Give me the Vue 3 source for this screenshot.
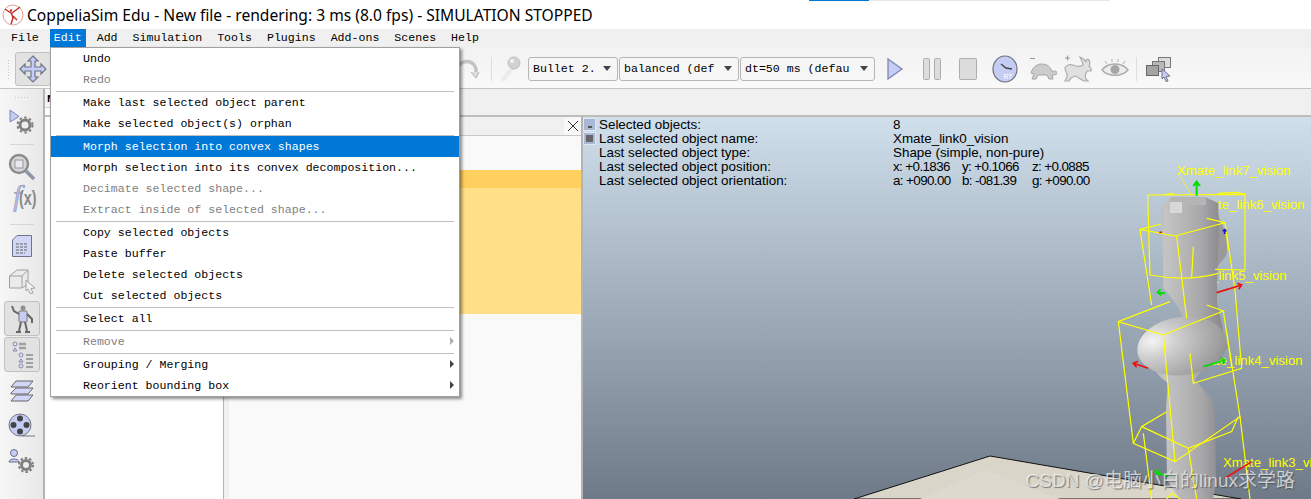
<template>
  <div class="window">
    <div class="titlebar">
      <svg class="app-logo" viewBox="0 0 22 22" width="22" height="22">
        <circle cx="11" cy="11" r="10" fill="#fff" stroke="#e2a09a" stroke-width="1" />
        <path d="M3 5 L9.500 9.500 L18 3 M9.500 9.500 L11 14 L9 20 M11 12 L15 16" fill="none" stroke="#c5281e" stroke-width="1.400" />
        <circle cx="9" cy="6.500" r="1.200" fill="#c5281e" />
      </svg>
      <span class="title-text">CoppeliaSim Edu - New file - rendering: 3 ms (8.0 fps) - SIMULATION STOPPED</span>
      <div class="top-strip"><i class="strip-blue"></i><i class="strip-grey"></i></div>
    </div>

    <div class="menubar">
      <span v-for="m in menus" :key="m" class="menu-item" :class="{ active: m === 'Edit' }">{{ m }}</span>
    </div>

    <div class="toolbar">
      <div class="grip"></div>
      <div class="tool-btn move-btn">
        <svg viewBox="0 0 30 30" width="30" height="30">
          <path d="M15 2 L20 7 H17 V13 H23 V10 L28 15 L23 20 V17 H17 V23 H20 L15 28 L10 23 H13 V17 H7 V20 L2 15 L7 10 V13 H13 V7 H10 Z" fill="#c6cdf5" stroke="#6f7688" stroke-width="1.200" />
        </svg>
      </div>
      <div class="toolbar-right">
        <svg class="undo-ghost" viewBox="0 0 24 24" width="24" height="24">
          <path d="M3 8 C9 2 18 4 20 12 L20 19" fill="none" stroke="#c4c4c4" stroke-width="3.500" />
          <path d="M15 15 L20 21 L23 15" fill="#dedede" stroke="#b5b5b5" />
        </svg>
        <div class="vsep"></div>
        <svg class="pin" viewBox="0 0 26 28" width="26" height="28">
          <path d="M4 25 L15 11 L19 13 L8 27 Z" fill="#ececec" />
          <circle cx="18" cy="8" r="6" fill="#d2d2d2" stroke="#bdbdbd" />
          <circle cx="16" cy="6" r="2" fill="#f3f3f3" />
        </svg>
        <div class="combo w-bullet">Bullet 2.<b></b></div>
        <div class="combo w-balanced">balanced (def<b></b></div>
        <div class="combo w-dt">dt=50 ms (defau<b></b></div>
        <svg class="play" viewBox="0 0 18 24" width="18" height="24">
          <path d="M2 2 L16 12 L2 22 Z" fill="#c6cdf5" stroke="#7d86b5" stroke-width="1.300" />
        </svg>
        <svg class="pause" viewBox="0 0 20 24" width="20" height="24">
          <rect x="1.500" y="1.500" width="6" height="21" rx="1" fill="#dcdcdc" stroke="#adadad" />
          <rect x="12.500" y="1.500" width="6" height="21" rx="1" fill="#dcdcdc" stroke="#adadad" />
        </svg>
        <svg class="stop" viewBox="0 0 18 24" width="18" height="24">
          <rect x="0.500" y="1.500" width="17" height="21" rx="1" fill="#dcdcdc" stroke="#adadad" />
        </svg>
        <svg class="clock" viewBox="0 0 26 28" width="26" height="28">
          <ellipse cx="13" cy="14" rx="12" ry="13" fill="#c6cdf5" stroke="#6d7180" stroke-width="1.200" />
          <path d="M9 9 L14 13 L20 14" fill="none" stroke="#444" stroke-width="1.400" />
          <text x="16" y="24" class="rt">RT</text>
        </svg>
        <svg class="turtle" viewBox="0 0 28 26" width="28" height="26">
          <path d="M1 2.500 H6" stroke="#999" />
          <path d="M2 17 C4 10 9 8 13 8 C18 8 22 11 23 16 C25 14 28 15 28 17 C28 19 25 19 23 19 L24 23 H20 L18 19 H9 L7 23 H3 L5 18 Z" fill="#cccccc" stroke="#a6a6a6" />
        </svg>
        <svg class="rabbit" viewBox="0 0 28 27" width="28" height="27">
          <path d="M1 3 H6 M3.500 0.500 V5.500" stroke="#999" />
          <path d="M1 13 C2 10 6 9 9 10 C13 12 16 12 19 10 C19 7 17 4 16 2 C19 3 21 5 22 7 C22 5 23 4 24 4 C26 6 26 9 25 11 C27 13 28 15 27 16 L23 16 C22 19 20 21 22 24 L24 26 L20 26 C16 24 14 22 11 21 C8 22 6 24 5 26 L1 26 L3 22 C4 19 1 16 1 13 Z" fill="#e0e0e0" stroke="#adadad" stroke-width="1.200" />
        </svg>
        <svg class="eye" viewBox="0 0 28 20" width="28" height="20">
          <path d="M1 11 C7 3 21 3 27 11 C21 18 7 18 1 11 Z" fill="#ececec" stroke="#a8a8a8" stroke-width="1.300" />
          <circle cx="14" cy="10.500" r="4.500" fill="#a6a6a6" />
          <path d="M6 5 L4 2 M11 3 V0 M17 3 V0 M22 5 L24 2" stroke="#b0b0b0" />
        </svg>
        <div class="vsep sep-last"></div>
        <svg class="layers" viewBox="0 0 28 26" width="28" height="26">
          <rect x="13.500" y="1.500" width="12" height="10" fill="#dcdcdc" stroke="#777" />
          <rect x="7.500" y="5.500" width="12" height="10" fill="#b8b8b8" stroke="#777" />
          <rect x="1.500" y="9.500" width="12" height="10" fill="#a4a4a4" stroke="#666" />
          <path d="M17 13 L25 20 L21 20.500 L23 25 L21 25.500 L19 21 L17 23 Z" fill="#c6cdf5" stroke="#6f7688" />
        </svg>
      </div>
    </div>

    <div class="lower">
      <aside class="sidebar">
        <div class="side-grip"></div>
        <svg class="side-icon i-gear" viewBox="0 0 26 26" width="26" height="26">
          <path d="M1 1 L10 7.500 L1 13 Z" fill="#c6cdf5" stroke="#7d86b5" />
          <circle cx="16" cy="16" r="5" fill="none" stroke="#808080" stroke-width="3" />
          <circle cx="16" cy="16" r="7.500" fill="none" stroke="#808080" stroke-width="2" stroke-dasharray="2.500 2.400" />
        </svg>
        <div class="side-sep sep-a"></div>
        <svg class="side-icon i-magnify" viewBox="0 0 28 28" width="28" height="28">
          <circle cx="11" cy="11" r="9" fill="#d6d6dc" stroke="#8b8b8b" stroke-width="2.400" />
          <rect x="7" y="7" width="8" height="8" fill="#e8e8ee" stroke="#999" />
          <path d="M18 18 L26 26" stroke="#8d95a8" stroke-width="3.500" />
        </svg>
        <svg class="side-icon i-fx" viewBox="0 0 28 30" width="28" height="30">
          <text x="5" y="24" class="fx-f">f</text>
          <text transform="translate(11 23) scale(0.72 1)" class="fx-x">(x)</text>
        </svg>
        <div class="side-sep sep-b"></div>
        <svg class="side-icon i-doc" viewBox="0 0 22 24" width="22" height="24">
          <path d="M6 1.500 H20.500 V22.500 H1.500 V6 Z" fill="#d2d6f7" stroke="#6e7388" />
          <path d="M5 10 H17 M5 13 H17 M5 16 H17 M5 19 H14" stroke="#666" stroke-dasharray="3 1" />
        </svg>
        <svg class="side-icon i-cube" viewBox="0 0 28 26" width="28" height="26">
          <path d="M1.500 8 L9 2 H20 V16 L14 20 H1.500 Z M1.500 8 H14 V20 M14 8 L20 2" fill="#ebebeb" stroke="#a0a0a0" />
          <path d="M18 12 L27 20 L23 20.500 L25 25 L22 25.500 L20 21 L18 23 Z" fill="#f1f1f1" stroke="#a0a0a0" />
        </svg>
        <div class="side-btn i-robot">
          <svg viewBox="0 0 30 30" width="30" height="30">
            <circle cx="16" cy="4" r="2.500" fill="#8d8d8d" />
            <rect x="12" y="7" width="8" height="11" rx="1" fill="#c6cdf5" stroke="#777" />
            <path d="M12 10 L7 7 L5 2 M20 10 L25 15 L25 19 M14 18 L12 27 M18 18 L20 27" fill="none" stroke="#666" stroke-width="2" />
            <path d="M9 28 H14 M18 28 H23" stroke="#666" stroke-width="2" />
          </svg>
        </div>
        <div class="side-btn i-list">
          <svg viewBox="0 0 30 30" width="30" height="30">
            <circle cx="8" cy="4" r="2" fill="none" stroke="#8088b5" />
            <path d="M8 8 L10 11 H6 Z" fill="none" stroke="#8088b5" />
            <path d="M12 4 H19 M12 8 H19" stroke="#a0a0a0" stroke-width="2.500" />
            <circle cx="14" cy="15" r="2" fill="none" stroke="#8088b5" />
            <path d="M14 19 L16 22 H12 Z" fill="none" stroke="#8088b5" />
            <circle cx="14" cy="26" r="2" fill="none" stroke="#8088b5" />
            <path d="M19 15 H26 M19 19 H26 M19 23 H26 M19 27 H26" stroke="#a0a0a0" stroke-width="2.200" />
          </svg>
        </div>
        <svg class="side-icon i-stack" viewBox="0 0 24 22" width="24" height="22">
          <path d="M6 1 H23 L18 7 H1 Z" fill="#d2d6f7" stroke="#666" />
          <path d="M1 13 L6 8 H23 L18 14 H1 Z" fill="#d2d6f7" stroke="#666" />
          <path d="M1 21 L6 15 H23 L18 21 Z" fill="#d2d6f7" stroke="#666" />
        </svg>
        <svg class="side-icon i-film" viewBox="0 0 28 26" width="28" height="26">
          <circle cx="12" cy="12" r="11" fill="#c6cdf5" stroke="#75757f" />
          <circle cx="12" cy="5.500" r="3" fill="#444" />
          <circle cx="12" cy="18.500" r="3" fill="#444" />
          <circle cx="5.500" cy="12" r="3" fill="#444" />
          <circle cx="18.500" cy="12" r="3" fill="#444" />
          <path d="M14 23 H27" stroke="#777" />
        </svg>
        <svg class="side-icon i-user" viewBox="0 0 28 26" width="28" height="26">
          <circle cx="6" cy="5" r="3.500" fill="#c6cdf5" stroke="#666a88" />
          <path d="M1 14 C1 10 11 10 11 14 Z" fill="#c6cdf5" stroke="#666a88" />
          <circle cx="18" cy="17" r="4.500" fill="none" stroke="#808080" stroke-width="3" />
          <circle cx="18" cy="17" r="7" fill="none" stroke="#808080" stroke-width="2" stroke-dasharray="2.500 2" />
        </svg>
      </aside>

      <div class="work">
        <div class="subbar">
          <div class="hier-head"><div class="hier-tab">N</div></div>
        </div>
        <div class="body">
          <div class="hierarchy"></div>

          <section class="panel">
            <div class="panel-head"><span class="close-x">
              <svg viewBox="0 0 14 14" width="14" height="14"><path d="M2 2 L12 12 M12 2 L2 12" stroke="#333" /></svg>
            </span></div>
            <div class="panel-gap"></div>
            <div class="row-strong"></div>
            <div class="row-light"></div>
          </section>

          <main class="viewport">
            <svg class="scene" viewBox="583 117 728 382" width="728" height="382">
              <defs>
                <linearGradient id="metal" x1="0" x2="1" y1="0" y2="0">
                  <stop offset="0" stop-color="#8f8f91" />
                  <stop offset="0.3" stop-color="#c4c4c4" />
                  <stop offset="0.7" stop-color="#a9a9ab" />
                  <stop offset="1" stop-color="#808082" />
                </linearGradient>
                <radialGradient id="bulge" cx="0.18" cy="0.35" r="0.9">
                  <stop offset="0" stop-color="#f4f4f4" />
                  <stop offset="0.3" stop-color="#cfcfcf" />
                  <stop offset="1" stop-color="#909092" />
                </radialGradient>
              </defs>

              <path d="M854 499 L990 456 L1241 499 Z" fill="#d9d5c9" stroke="#111" stroke-width="1" />
              <path d="M920 499 L985 470 L1060 499 Z" fill="#ded9ce" />

              <text x="1177" y="175" class="label">Xmate_link7_vision</text>
              <text x="1191" y="209" class="label">Xmate_link6_vision</text>
              <text x="1173" y="280" class="label">Xmate_link5_vision</text>
              <text x="1189" y="365" class="label">Xmate_link4_vision</text>
              <text x="1223" y="467" class="label">Xmate_link3_vision</text>

              <path d="M1215 212 C1224 222 1230 245 1226 256 L1216 268 L1205 262 Z" fill="#9a9a9c" />
              <path d="M1161 207 L1170 197 H1205 L1218 203 L1219 225 L1217 283 L1217 303 L1223 330 L1227 347 L1220 360 L1203 368 L1195 380 L1213 400 L1215 417 L1216 483 L1213 499 H1180 L1167 480 L1166 407 L1168 383 L1160 377 L1138 350 L1143 332 L1163 322 L1183 318 L1178 307 L1163 287 L1163 263 Z" fill="url(#metal)" />
              <ellipse cx="1182" cy="346" rx="45" ry="29" fill="url(#bulge)" transform="rotate(-8 1182 346)" />
              <rect x="1170" y="197" width="36" height="8" fill="#b5b5b5" />
              <rect x="1170" y="202" width="12" height="11" fill="#d8d8d8" />

              <!-- wireframes, drawn in crop coordinates -->
              <g transform="translate(1080 150) scale(0.3333)" fill="none" stroke="#ffff00" stroke-width="3.600">
                <path d="M295 70 L335 135" stroke-width="2" />
                <path d="M203 135 L495 133 V360 L405 358 M203 135 L210 375 C280 388 350 388 415 370 M250 135 L280 130 M415 130 L470 127 L495 133" />
                <path d="M180 238 L285 258 L435 218 L445 300 M180 238 L245 222 M435 218 L380 205 M180 238 L215 465 M435 218 L465 420 L485 655 L340 700 L330 610 M290 258 L320 505 M340 290 L335 385" />
                <path d="M115 515 L270 455 M115 515 L250 555 L430 483 L380 465 M115 515 L160 880 L285 935 L480 800 L440 545 M250 555 L285 935 M430 483 L455 650" />
                <path d="M185 830 L260 785 M160 880 L185 830 L325 895 L455 845 L475 800 M325 895 L350 1047 M190 850 L215 1047 M480 800 L510 1047 M260 1047 L275 1030 L300 1047" />
              </g>
              <g transform="translate(1080 150) scale(0.3333)" fill="none" stroke-width="5">
                <path d="M350 137 V95 M340 108 L350 95 L360 108" stroke="#00dd00" stroke-width="6" />
                <path d="M255 430 L232 427 M242 418 L232 427 L244 436" stroke="#00dd00" />
                <path d="M370 650 L435 630 M422 625 L435 630 L428 642" stroke="#00dd00" />
                <path d="M265 980 L225 965 M238 960 L225 965 L236 976" stroke="#00dd00" />
                <path d="M410 428 L485 405 M472 400 L485 405 L476 418" stroke="#ee1111" />
                <path d="M205 655 L160 640 M174 634 L160 640 L170 652" stroke="#ee1111" />
                <path d="M435 985 L515 935" stroke="#ee1111" />
                <path d="M238 247 H246" stroke="#ee1111" />
                <path d="M428 242 H440 M434 236 V252" stroke="#1111dd" />
              </g>
            </svg>

            <div class="info">
              <div class="info-btns">
                <span class="info-btn"><i class="dash"></i></span>
                <span class="info-btn"><i class="sq"></i></span>
              </div>
              <div class="info-rows">
                <div v-for="r in infoRows" :key="r.label" class="info-row">
                  <span class="info-label">{{ r.label }}</span>
                  <span class="info-val" :class="{ cols: r.values.length > 1 }">
                    <span v-for="v in r.values" :key="v">{{ v }}</span>
                  </span>
                </div>
              </div>
            </div>
          </main>
        </div>
      </div>
    </div>

    <div class="edit-menu">
      <template v-for="(item, i) in editMenu" :key="i">
        <div v-if="item.sep" class="menu-sep"></div>
        <div v-else class="entry" :class="{ disabled: item.disabled, selected: item.selected }">
          <span>{{ item.label }}</span>
          <i v-if="item.sub" class="submenu-arrow"></i>
        </div>
      </template>
    </div>

    <div class="watermark">CSDN @电脑小白的linux求学路</div>
  </div>
</template>

<script setup>
const menus = ['File', 'Edit', 'Add', 'Simulation', 'Tools', 'Plugins', 'Add-ons', 'Scenes', 'Help']

const editMenu = [
  { label: 'Undo' },
  { label: 'Redo', disabled: true },
  { sep: true },
  { label: 'Make last selected object parent' },
  { label: 'Make selected object(s) orphan' },
  { sep: true },
  { label: 'Morph selection into convex shapes', selected: true },
  { label: 'Morph selection into its convex decomposition...' },
  { label: 'Decimate selected shape...', disabled: true },
  { label: 'Extract inside of selected shape...', disabled: true },
  { sep: true },
  { label: 'Copy selected objects' },
  { label: 'Paste buffer' },
  { label: 'Delete selected objects' },
  { label: 'Cut selected objects' },
  { sep: true },
  { label: 'Select all' },
  { sep: true },
  { label: 'Remove', disabled: true, sub: true },
  { sep: true },
  { label: 'Grouping / Merging', sub: true },
  { label: 'Reorient bounding box', sub: true }
]

const infoRows = [
  { label: 'Selected objects:', values: ['8'] },
  { label: 'Last selected object name:', values: ['Xmate_link0_vision'] },
  { label: 'Last selected object type:', values: ['Shape (simple, non-pure)'] },
  { label: 'Last selected object position:', values: ['x: +0.1836', 'y: +0.1066', 'z: +0.0885'] },
  { label: 'Last selected object orientation:', values: ['a: +090.00', 'b: -081.39', 'g: +090.00'] }
]
</script>

<style>
html, body {
  margin: 0;
  background: #fff;
  overflow: hidden;
}
</style>

<style scoped>
.window {
  position: relative;
  width: 1311px;
  height: 499px;
  overflow: hidden;
  display: flex;
  flex-direction: column;
  font-family: "Liberation Sans", Arial, sans-serif;
  background: #f0f0f0;
}

.titlebar {
  position: relative;
  height: 29px;
  flex: none;
  display: flex;
  align-items: center;
  padding-left: 2px;
  gap: 3px;
  background: #fff;
}

.title-text {
  font-family: "Noto Sans", sans-serif;
  font-size: 15.600px;
  color: #000;
}

.top-strip {
  position: absolute;
  top: 0;
  left: 809px;
  display: flex;
}

.strip-blue {
  width: 60px;
  height: 1px;
  background: #0078d7;
}

.strip-grey {
  width: 241px;
  height: 1px;
  background: #e6e6e6;
}

.menubar {
  height: 18px;
  flex: none;
  display: flex;
  gap: 7px;
  padding-left: 7px;
  background: #f0f0f0;
  font-family: "Liberation Mono", monospace;
  font-size: 11.600px;
  line-height: 18px;
  color: #000;
}

.menu-item {
  padding: 0 4px;
}

.menu-item.active {
  background: #0078d7;
  color: #fff;
}

.toolbar {
  height: 42px;
  flex: none;
  display: flex;
  align-items: center;
  box-sizing: border-box;
  padding-top: 3px;
  background: linear-gradient(#f2f2f2, #f9f9f9);
  border-bottom: 1px solid #c4c4c4;
}

.grip {
  width: 4px;
  height: 20px;
  margin-left: 7px;
  background-image: radial-gradient(#c4c4c4 1px, transparent 1px);
  background-size: 3px 3px;
}

.tool-btn {
  display: flex;
  align-items: center;
  justify-content: center;
  width: 36px;
  height: 34px;
  margin-left: 4px;
  box-sizing: border-box;
  background: #e2e2e2;
  border: 1px solid #c0c0c0;
  border-radius: 3px;
}

.toolbar-right {
  display: flex;
  align-items: center;
  margin-top: -1px;
  margin-left: 400px;
}

.undo-ghost {
  margin-left: 5px;
}

.vsep {
  width: 1px;
  height: 24px;
  margin-left: 11px;
  background: #dedede;
}

.pin {
  margin-left: 4px;
  margin-right: 6px;
}

.combo {
  position: relative;
  height: 24px;
  box-sizing: border-box;
  margin-right: 1px;
  padding-left: 4px;
  background: #f6f6f6;
  border: 1px solid #b6b6b6;
  border-radius: 3px;
  font-family: "Liberation Mono", monospace;
  font-size: 11.600px;
  line-height: 22px;
  color: #000;
}

.combo b {
  position: absolute;
  right: 6px;
  top: 8px;
  border-left: 4px solid transparent;
  border-right: 4px solid transparent;
  border-top: 5px solid #444;
}

.w-bullet {
  width: 90px;
}

.w-balanced {
  width: 120px;
}

.w-dt {
  width: 135px;
}

.play {
  margin-left: 10px;
}

.pause {
  margin-left: 18px;
}

.stop {
  margin-left: 17px;
}

.clock {
  margin-left: 15px;
}

.turtle {
  margin-left: 11px;
}

.rabbit {
  margin-left: 7px;
}

.eye {
  margin-left: 9px;
}

.sep-last {
  margin-left: 7px;
  margin-right: 8px;
}

.rt {
  font-family: "Liberation Sans", sans-serif;
  font-size: 7px;
  fill: #fff;
  text-anchor: middle;
}

.lower {
  flex: 1;
  min-height: 0;
  display: flex;
}

.sidebar {
  width: 45px;
  flex: none;
  box-sizing: border-box;
  display: flex;
  flex-direction: column;
  align-items: center;
  padding-top: 7px;
  background: linear-gradient(90deg, #f7f7f7, #e8e8e8);
  border-right: 2px solid #b4b4b4;
}

.side-grip {
  width: 16px;
  height: 4px;
  flex: none;
  background-image: radial-gradient(#c4c4c4 1px, transparent 1px);
  background-size: 3px 3px;
}

.side-icon {
  flex: none;
  display: block;
}

.side-sep {
  width: 24px;
  height: 1px;
  flex: none;
  background: #d6d6d6;
}

.i-gear {
  margin-top: 9px;
}

.sep-a {
  margin-top: 9px;
}

.i-magnify {
  margin-top: 8px;
}

.i-fx {
  margin-top: 1px;
}

.sep-b {
  margin-top: 12px;
}

.i-doc {
  margin-top: 9px;
}

.i-cube {
  margin-top: 10px;
}

.fx-f {
  font-family: "Liberation Serif", serif;
  font-style: italic;
  font-size: 30px;
  fill: #b4bade;
  stroke: #7f86b0;
  stroke-width: 0.4;
}

.fx-x {
  font-family: "Liberation Sans", sans-serif;
  font-weight: bold;
  font-size: 20px;
  fill: #8a8a8a;
}

.side-btn {
  flex: none;
  display: flex;
  align-items: center;
  justify-content: center;
  width: 36px;
  height: 35px;
  box-sizing: border-box;
  background: #e2e2e2;
  border: 1px solid #c0c0c0;
  border-radius: 3px;
}

.i-robot {
  margin-top: 7px;
}

.i-list {
  margin-top: 1px;
}

.i-stack {
  margin-top: 8px;
}

.i-film {
  margin-top: 11px;
}

.i-user {
  margin-top: 9px;
}

.work {
  flex: 1;
  min-width: 0;
  display: flex;
  flex-direction: column;
}

.subbar {
  height: 28px;
  flex: none;
  box-sizing: border-box;
  background: #f0f0f0;
  border-bottom: 2px solid #bdbdbd;
}

.hier-head {
  width: 179px;
  height: 26px;
  padding-top: 1px;
  box-sizing: border-box;
  background: #fff;
}

.hier-tab {
  height: 17px;
  padding-left: 2px;
  background: #f4f4f4;
  border-bottom: 1px solid #d0d0d0;
  font-family: "Liberation Mono", monospace;
  font-size: 11.600px;
  font-weight: bold;
  line-height: 17px;
}

.body {
  flex: 1;
  min-height: 0;
  display: flex;
}

.hierarchy {
  width: 179px;
  flex: none;
  box-sizing: border-box;
  background: #fff;
  border-right: 1px solid #b4b4b4;
}

.panel {
  width: 359px;
  flex: none;
  display: flex;
  flex-direction: column;
  background: #f9f9f9;
  border-left: 5px solid #f0f0f0;
  border-right: 2px solid #b4b4b4;
  box-sizing: border-box;
}

.panel-head {
  height: 19px;
  flex: none;
  display: flex;
  justify-content: flex-end;
  box-sizing: border-box;
  background: #f0f0f0;
  border-bottom: 1px solid #c8c8c8;
}

.close-x {
  display: flex;
  align-items: center;
  justify-content: center;
  width: 17px;
  height: 18px;
  background: #f8f8f8;
}

.panel-gap {
  height: 34px;
  flex: none;
}

.row-strong {
  height: 18px;
  flex: none;
  background: #ffd060;
}

.row-light {
  height: 126px;
  flex: none;
  background: #ffe088;
}

.viewport {
  position: relative;
  flex: 1;
  min-width: 0;
  overflow: hidden;
  background: linear-gradient(#cfdfeb, #6f7a88);
}

.info {
  position: relative;
  display: flex;
  font-family: "Liberation Sans", sans-serif;
  font-size: 13.400px;
  line-height: 14px;
  color: #000;
  padding-top: 1px;
}

.info-btns {
  width: 16px;
  flex: none;
  display: flex;
  flex-direction: column;
}

.info-btn {
  display: flex;
  align-items: center;
  justify-content: center;
  width: 11px;
  height: 11px;
  margin: 0 0 1px 0;
  border: 1px solid #dfe6f0;
  background: #a9b8d6;
}

.info-btn .sq {
  width: 7px;
  height: 7px;
  background: #666;
}

.info-btn .dash {
  width: 4px;
  height: 2px;
  margin-top: 4px;
  background: #555;
}

.info-rows {
  display: flex;
  flex-direction: column;
}

.info-row {
  display: flex;
}

.info-label {
  width: 294px;
  flex: none;
}

.info-val.cols {
  display: grid;
  grid-template-columns: 69px 70px auto;
  letter-spacing: -0.6px;
}

.scene {
  position: absolute;
  left: 0;
  top: 0;
}

.label {
  font-family: "Liberation Sans", sans-serif;
  font-size: 13.200px;
  fill: #ffff00;
}

.edit-menu {
  position: absolute;
  left: 50px;
  top: 47px;
  width: 410px;
  box-sizing: border-box;
  background: #fff;
  border: 1px solid #a0a0a0;
  box-shadow: 2px 2px 3px rgba(0, 0, 0, 0.45);
  font-family: "Liberation Mono", monospace;
  font-size: 11.600px;
  color: #000;
}

.entry {
  position: relative;
  height: 21px;
  line-height: 21px;
  padding-left: 32px;
  white-space: pre;
}

.entry.disabled {
  color: #808080;
}

.entry.selected {
  background: #0078d7;
  color: #fff;
}

.submenu-arrow {
  position: absolute;
  right: 5px;
  top: 6px;
  border-top: 4px solid transparent;
  border-bottom: 4px solid transparent;
  border-left: 4px solid #444;
}

.entry.disabled .submenu-arrow {
  border-left-color: #b0b0b0;
}

.menu-sep {
  height: 1px;
  margin: 1px 5px 0;
  background: #c0c0c0;
}

.watermark {
  position: absolute;
  right: 16px;
  bottom: 7px;
  font-family: "Liberation Sans", "Noto Sans CJK SC", sans-serif;
  font-size: 19px;
  color: rgba(245, 245, 245, 0.72);
  text-shadow: 1px 1px 1px rgba(60, 60, 60, 0.6);
}
</style>
